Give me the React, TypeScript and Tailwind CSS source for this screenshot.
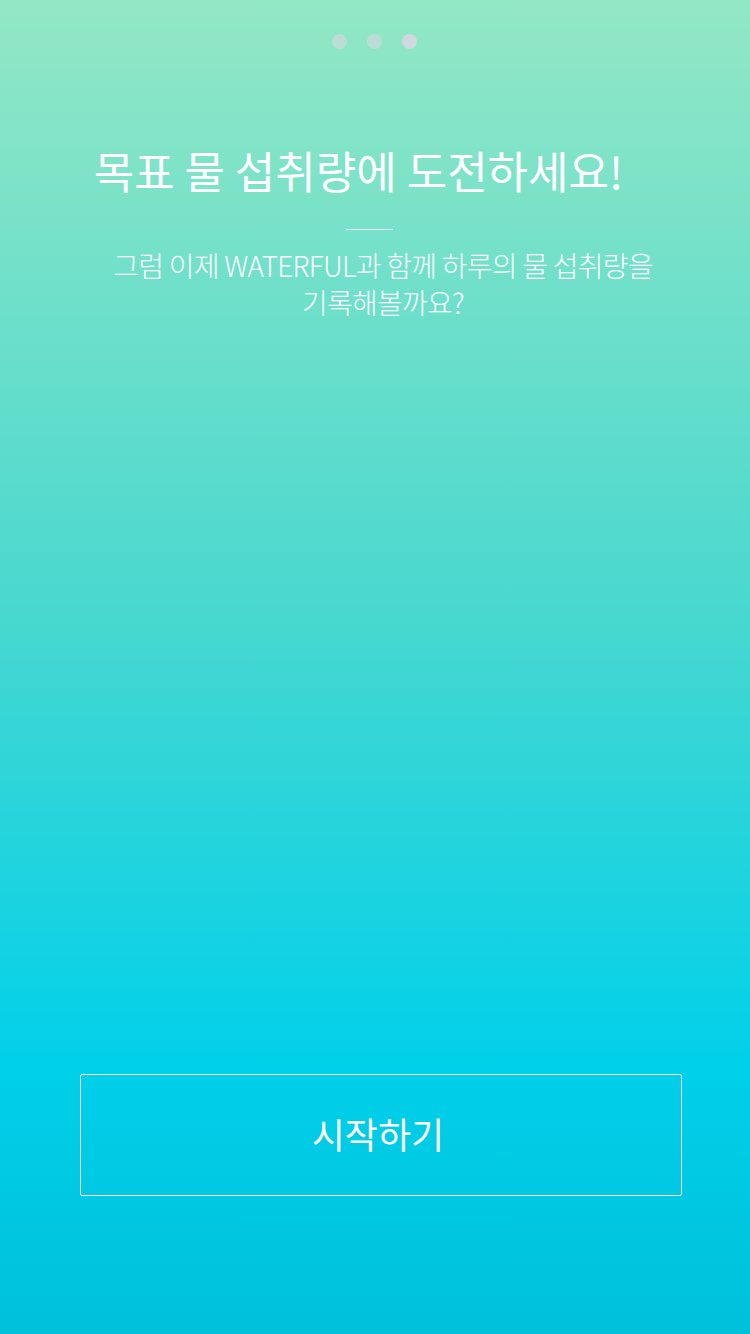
import React from "react";

export default function App() {
  const font = { fontFamily: '"Noto Sans CJK KR", "Noto Sans", sans-serif' };
  return (
    <div
      className="w-[750px] h-[1334px] flex flex-col items-center bg-[linear-gradient(180deg,#93e7c5_0%,#4ad8cf_45%,#00d0ea_80%,#00c0da_100%)] text-white"
      style={font}
    >
      <div className="flex gap-5 mt-[34px] mr-[2px]">
        <span className="w-[15px] h-[15px] rounded-full bg-[#bcddd6]" />
        <span className="w-[15px] h-[15px] rounded-full bg-[#bcddd6]" />
        <span className="w-[15px] h-[15px] rounded-full bg-[#d0d8e0]" />
      </div>
      <h1 className="mt-[92px] text-[44px] leading-[58px] font-normal tracking-[0px] pr-[33px]">
        목표 물 섭취량에 도전하세요!
      </h1>
      <div className="mt-[30px] w-[47px] h-px bg-white/80 mr-[11px]" />
      <p className="mt-[17px] text-[28px] leading-[37px] font-light tracking-[-0.75px] text-center pl-[16px]">
        그럼 이제 WATERFUL과 함께 하루의 물 섭취량을
        <br />
        기록해볼까요?
      </p>
      <div className="flex-1" />
      <button className="mb-[138px] ml-[12px] w-[602px] h-[122px] border border-white rounded-[2px] text-[36px] font-normal text-white flex items-center justify-center pb-1 pr-[6px]">
        시작하기
      </button>
    </div>
  );
}
